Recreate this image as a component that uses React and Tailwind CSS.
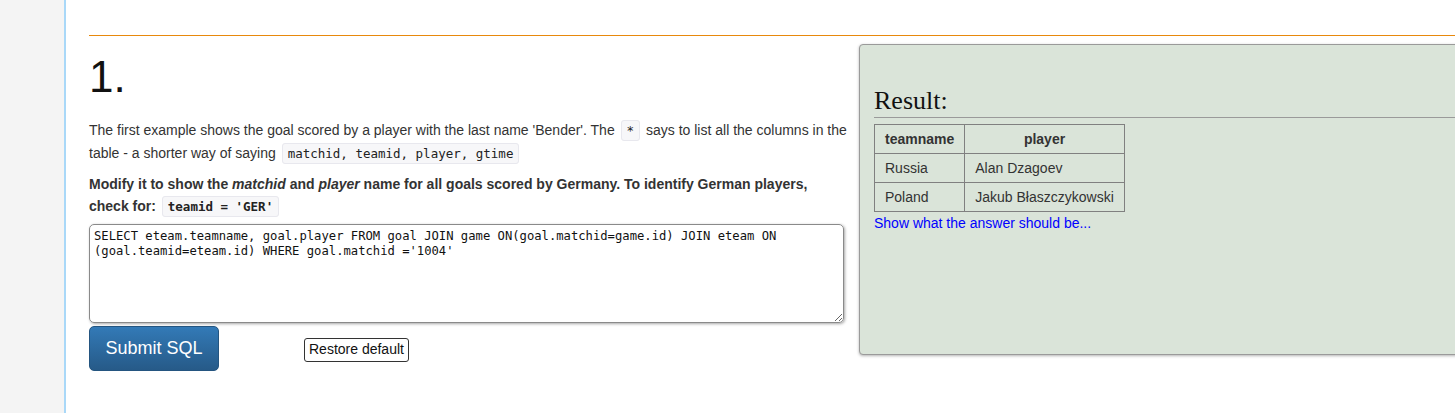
import React, { useState } from 'react';

const DEFAULT_SQL =
  "SELECT eteam.teamname, goal.player FROM goal JOIN game ON(goal.matchid=game.id) JOIN eteam ON (goal.teamid=eteam.id) WHERE goal.matchid ='1004'";

const rows = [
  { teamname: 'Russia', player: 'Alan Dzagoev' },
  { teamname: 'Poland', player: 'Jakub Błaszczykowski' },
];

const Code = ({ children }) => (
  <code className="font-['DejaVu_Sans_Mono',monospace] text-[12.5px] text-[#222] bg-[#f7f7f9] border border-[#e8e8ee] rounded-[3px] px-[5px] py-[2px] mx-[2px]">
    {children}
  </code>
);

const App = () => {
  const [sql, setSql] = useState(DEFAULT_SQL);

  return (
    <div className="flex w-[1455px] h-[413px] overflow-hidden bg-white font-['Liberation_Sans',Arial,sans-serif] text-[#333]">
      {/* Left gutter */}
      <div className="w-[66px] shrink-0 bg-[#f4f4f4] border-r-2 border-[#a9d8f8]" />

      <div className="flex-1 pl-[23px] pt-[35px] min-w-0">
        <div className="border-t border-[#e8890c]" />

        <div className="flex">
          {/* Question column */}
          <div className="w-[756px] shrink-0">
            <h1 className="text-[44px] leading-none text-[#111] mt-[19px] mb-[20px]">1.</h1>

            <p className="text-[14px] leading-[23px] w-[762px]">
              The first example shows the goal scored by a player with the last name 'Bender'. The <Code>*</Code> says
              to list all the columns in the table - a shorter way of saying <Code>matchid, teamid, player, gtime</Code>
            </p>

            <p className="text-[14px] leading-[22px] font-bold mt-[8px]">
              Modify it to show the <i>matchid</i> and <i>player</i> name for all goals scored by Germany. To identify
              German players, check for: <Code>teamid = 'GER'</Code>
            </p>

            <textarea
              value={sql}
              onChange={(e) => setSql(e.target.value)}
              spellCheck={false}
              className="block mt-[6px] w-[755px] h-[99px] p-[4px] border border-[#8a8a8a] rounded-[5px] shadow-[1px_1px_3px_rgba(0,0,0,0.35)] font-['DejaVu_Sans_Mono',monospace] text-[12.2px] leading-[15px] text-[#111] resize-y outline-none"
            />

            <div className="flex items-center mt-[3px]">
              <button className="w-[130px] h-[45px] rounded-[5px] border border-[#245580] bg-gradient-to-b from-[#337ab7] to-[#265a88] text-white text-[18px]">
                Submit SQL
              </button>
              <button
                onClick={() => setSql(DEFAULT_SQL)}
                className="ml-[85px] mt-[2px] px-[4px] h-[24px] border border-[#333] rounded-[3px] bg-white text-[14px] text-[#111]"
              >
                Restore default
              </button>
            </div>
          </div>

          {/* Result panel */}
          <div className="ml-[14px] mt-[8px] w-[640px] h-[311px] shrink-0 bg-[#dae4d9] border border-[#9a9a9a] rounded-[4px] shadow-[0_1px_3px_rgba(0,0,0,0.3)] pl-[14px]">
            <h2 className="font-['Liberation_Serif',serif] text-[26px] leading-none text-[#111] mt-[43px] pb-[3px] border-b border-[#9a9a9a]">
              Result:
            </h2>
            <table className="mt-[6px] border-collapse text-[14px] text-[#333] whitespace-nowrap">
              <thead>
                <tr className="h-[29px]">
                  <th className="border border-[#808080] px-[10px] font-bold">teamname</th>
                  <th className="border border-[#808080] px-[10px] font-bold">player</th>
                </tr>
              </thead>
              <tbody>
                {rows.map((r) => (
                  <tr key={r.teamname} className="h-[29px]">
                    <td className="border border-[#808080] px-[10px]">{r.teamname}</td>
                    <td className="border border-[#808080] px-[10px]">{r.player}</td>
                  </tr>
                ))}
              </tbody>
            </table>
            <a href="#" className="block mt-[1px] text-[14px] text-[#0000ff]">
              Show what the answer should be...
            </a>
          </div>
        </div>
      </div>
    </div>
  );
};

export default App;
